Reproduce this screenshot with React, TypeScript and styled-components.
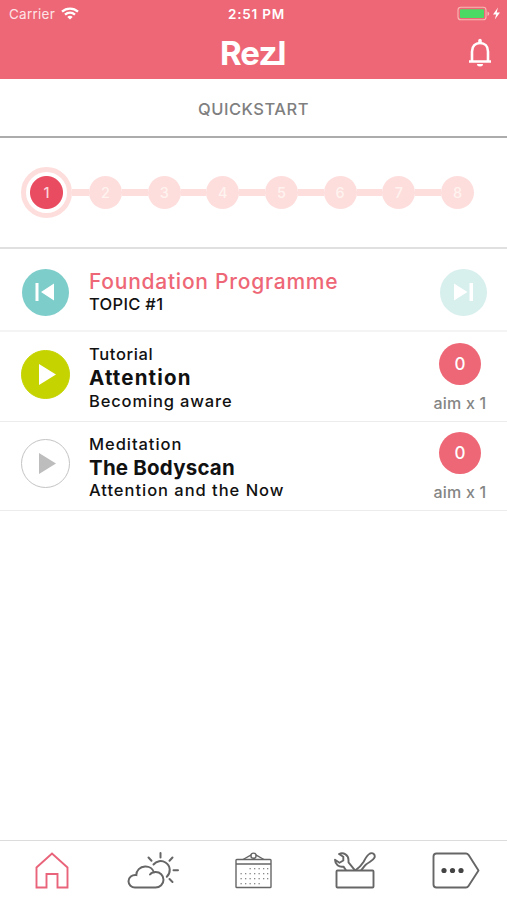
import styled, { createGlobalStyle } from "styled-components";

const GlobalStyle = createGlobalStyle`
  * {
    box-sizing: border-box;
  }

  body {
    margin: 0;
    background: #fff;
    font-family: Inter, "Liberation Sans", sans-serif;
    color: #111;
  }
`;

const Screen = styled.div`
  width: 100%;
  height: 100vh;
  display: flex;
  flex-direction: column;
  overflow: hidden;
`;

const Header = styled.header`
  height: 79px;
  background: #ee6776;
  color: #fff;
  flex: none;
`;

const StatusBar = styled.div`
  height: 27px;
  padding: 0 5px 0 9px;
  display: grid;
  grid-template-columns: 1fr auto 1fr;
  align-items: center;
  font-size: 13.5px;
`;

const Carrier = styled.div`
  display: flex;
  align-items: center;
  gap: 6px;
  letter-spacing: 0.25px;
  color: #fde4e6;
`;

const Clock = styled.div`
  padding-left: 2px;
  font-size: 13.5px;
  font-weight: 600;
  letter-spacing: 0.8px;
`;

const Battery = styled.div`
  display: flex;
  justify-content: flex-end;
`;

const Brand = styled.div`
  height: 52px;
  padding: 0 14px 0 220px;
  display: flex;
  align-items: center;
  justify-content: space-between;
`;

const Title = styled.h1`
  margin: 0;
  height: 59px;
  padding-top: 2px;
  flex: none;
  border-bottom: 2px solid #acacac;
  display: flex;
  align-items: center;
  justify-content: center;
  font-size: 16.5px;
  font-weight: 500;
  letter-spacing: 0.5px;
  color: #7f7f7f;
`;

const Steps = styled.div`
  height: 111px;
  flex: none;
  padding: 0 33px 0 21px;
  border-bottom: 2px solid #e0e0e0;
  display: flex;
  align-items: center;
`;

const Step = styled.div`
  width: 33px;
  height: 33px;
  border-radius: 50%;
  flex: none;
  display: flex;
  align-items: center;
  justify-content: center;
  background: #fddedd;
  color: #fff3ef;
  font-size: 14.5px;
  font-weight: 500;
`;

const ActiveStep = styled(Step)`
  width: 51px;
  height: 51px;
  border: 5px solid #fddedd;
  background: radial-gradient(circle, #e94b60 16px, #fff 17px);
  color: #fbd5da;
`;

const Connector = styled.div<{ $short?: boolean }>`
  flex: ${({ $short }) => ($short ? "0 0 17px" : "1")};
  height: 7px;
  background: #fddedd;
`;

const Row = styled.div<{ $height: number; $line?: number }>`
  height: ${({ $height }) => $height}px;
  flex: none;
  border-bottom: ${({ $line = 1 }) => $line}px solid ${({ $line = 1 }) => ($line > 1 ? "#f4f4f4" : "#ececec")};
  padding: ${({ $line = 1 }) => ($line > 1 ? "5px" : "2px")} 20px 0;
  display: grid;
  grid-template-columns: 69px 1fr 54px;
  align-items: center;
`;

const RoundButton = styled.button<{ $size: number; $bg: string; $line?: string }>`
  width: ${({ $size }) => $size}px;
  height: ${({ $size }) => $size}px;
  margin: 0 0 0 ${({ $size }) => (50 - $size) / 2}px;
  padding: 0;
  border: ${({ $line }) => ($line ? `1px solid ${$line}` : "none")};
  border-radius: 50%;
  background: ${({ $bg }) => $bg};
  display: flex;
  align-items: center;
  justify-content: center;
`;

const PlayButton = styled(RoundButton)`
  margin: 0 0 6px 0.5px;
`;

const NextButton = styled(RoundButton)`
  justify-self: end;
`;

const Lines = styled.div<{ $top?: number }>`
  padding-top: ${({ $top = 0 }) => $top}px;
  display: flex;
  flex-direction: column;
  white-space: nowrap;
`;

const Programme = styled.span`
  font-size: 21px;
  line-height: 23px;
  font-weight: 500;
  letter-spacing: 0.75px;
  color: #ee6776;
`;

const Line = styled.span<{ $spacing?: number }>`
  font-size: 16.5px;
  line-height: 23px;
  font-weight: 500;
  letter-spacing: ${({ $spacing = 0 }) => $spacing}px;
`;

const Name = styled.span<{ $spacing?: number }>`
  font-size: 20.5px;
  line-height: 23.5px;
  font-weight: 700;
  letter-spacing: ${({ $spacing = 0 }) => $spacing}px;
`;

const Goal = styled.div`
  padding-top: 1px;
  display: flex;
  flex-direction: column;
  align-items: center;
  white-space: nowrap;
  font-size: 16px;
  font-weight: 500;
  letter-spacing: 0.2px;
  color: #858585;
`;

const Count = styled.div`
  width: 42px;
  height: 42px;
  margin-bottom: 8px;
  border-radius: 50%;
  background: #ee6776;
  color: #fff;
  display: flex;
  align-items: center;
  justify-content: center;
  font-size: 17px;
`;

const TabBar = styled.nav`
  height: 60px;
  margin-top: auto;
  padding: 0 1px;
  flex: none;
  border-top: 1px solid #dcdcdc;
  display: grid;
  grid-template-columns: repeat(5, 1fr);
`;

const Tab = styled.button<{ $active?: boolean }>`
  padding: 0;
  border: 0;
  background: none;
  display: flex;
  align-items: center;
  justify-content: center;
  color: ${({ $active }) => ($active ? "#e9647a" : "#666")};
`;

const WifiIcon = () => (
  <svg width="18" height="13" viewBox="0 0 18 13" fill="none" stroke="#fff" strokeWidth="2.3">
    <path d="M1 4.6C5.5.5 12.5.5 17 4.6" />
    <path d="M4 7.7c3-2.7 7-2.7 10 0" />
    <path d="M9 12.5 6.3 9.9c1.6-1.4 3.8-1.4 5.4 0z" fill="#fff" stroke="none" />
  </svg>
);

const BatteryIcon = () => (
  <svg width="45" height="15" viewBox="0 0 45 15" fill="none">
    <rect x="1" y="1.3" width="28" height="12.4" rx="2.8" stroke="#f8b9b5" strokeWidth="1.1" />
    <rect x="3" y="3.2" width="24" height="8.8" rx="1" fill="#4cd964" />
    <path d="M30.5 5.5v4.5q1.8-.8 1.8-2.2t-1.8-2.3z" fill="#f8b9b5" />
    <path d="M41 1.5 36 8.5h3.2L37.8 13.5 43 6.5h-3.3z" fill="#fff" />
  </svg>
);

const LogoMark = styled.div`
  display: flex;
  align-items: center;
  font-size: 33px;
  line-height: 40px;
  font-weight: 700;
  letter-spacing: -0.9px;
  padding-bottom: 1px;
`;

// the foot that ties the z to the l
const Foot = styled.span`
  width: 7px;
  height: 4px;
  margin: 21px -4px 0 -2px;
  background: #fff;
`;

const Logo = () => (
  <LogoMark>
    Rez
    <Foot />
    l
  </LogoMark>
);

const BellIcon = () => (
  <svg width="26" height="30" viewBox="0 0 26 30" fill="none" stroke="#fff" strokeWidth="2.6">
    <path d="M2 23.5h22M5 23.5V13.5C5 8 8.5 5 13 5s8 3 8 8.5v10" />
    <path d="M13 2.5v2" strokeWidth="3.5" strokeLinecap="round" />
    <path d="M10 26h6a3 2.5 0 0 1-6 0z" fill="#fff" stroke="none" />
  </svg>
);

const PlayIcon = ({ color = "#fff" }) => (
  <svg width="47" height="47" viewBox="1 1 47 47">
    <path d="M18 14v21l17-10.5z" fill={color} />
  </svg>
);

const SkipIcon = ({ forward = false }) => (
  <svg width="20" height="20" viewBox="0 0 20 20" fill="#fff">
    {forward ? (
      <path d="M0 1.5v17l13.5-8.500zM15.500 1H19v18h-3.500z" />
    ) : (
      <path d="M19 1.5v17L6 10zM.5 1H3.5v18H.5z" />
    )}
  </svg>
);

const HomeIcon = () => (
  <svg width="34" height="37" viewBox="0 0 34 37" fill="none" stroke="currentColor" strokeWidth="1.9">
    <path d="M1.500 35.500V15.500L17 1.500l15.500 14v20H22.500V22h-11v13.500z" />
  </svg>
);

const WeatherIcon = () => (
  <svg width="52" height="37" viewBox="0 0 52 37" fill="none" stroke="currentColor" strokeWidth="2" strokeLinecap="round">
    <path d="M8 35.5h20.5c4.5 0 8-3.5 8-7.8 0-4.4-3.5-7.7-7.8-7.7-2.5 0-4.500 1-5.700 2.500M27 20.500c-1-3.800-4.700-6.200-9-6-5 .2-8.700 4-8.700 8.600C5 22.600 1.500 25.500 1.500 29.300c0 3.500 3 6.200 6.500 6.200" />
    <path d="M26.500 12.500C29.500 9 34.500 8 38.500 10.500c5.500 3.400 5.300 10.500 1.300 14.200" />
    <path d="M33.500 1v4.500M21.500 5.500l3 3.200M45.500 5.500l-3 3.200M46.500 18.300H51M42.500 27l3 3" />
  </svg>
);

const dots = [16, 21, 26, 31].map((y, row) => ({
  y,
  xs: [5.5, 10, 14.5, 19, 23.5, 28, 32].slice(row === 0 ? 2 : 0, row === 3 ? 5 : 7),
}));

const CalendarIcon = () => (
  <svg width="37" height="37" viewBox="0 0 37 37" fill="none" stroke="currentColor" strokeWidth="1.4">
    <rect x="1" y="7.5" width="35" height="28" rx=".8" />
    <path d="M1 12h35M8 7.5l8.3-4.7M29 7.5l-8.3-4.7" />
    <circle cx="18.5" cy="3.7" r="2.6" />
    {dots.map(({ y, xs }) =>
      xs.map((x) => <rect key={`${x}-${y}`} x={x} y={y} width="1.3" height="1.3" fill="#888" stroke="none" />)
    )}
  </svg>
);

const ToolsIcon = () => (
  <svg width="42" height="37" viewBox="0 0 42 37" fill="none" stroke="currentColor" strokeWidth="1.9" strokeLinejoin="round">
    <rect x="2.5" y="18.5" width="37" height="17" rx="1" />
    <path d="M12 18.300 9.500 14.600C5 15.500 1 12.300 1 7.700l4.500 3L9.300 8.500V4.700L5 2C9.500 0 14.700 3 14.500 8.300v2l6.500 8" />
    <path d="M21.500 18.300c4-3 6-5 8-8.300 2-4 3.500-7 6.500-8.500 3-1.200 5.500 1 4.500 4.200-1.300 3-5 4-8.500 6.800-2 1.700-3 3.800-5 5.800" />
  </svg>
);

const MoreIcon = () => (
  <svg width="48" height="37" viewBox="0 0 48 37" fill="none" stroke="currentColor" strokeWidth="1.9" strokeLinejoin="round">
    <path d="M4.5 1.5H34q1.5 0 2.5 1.3L46.5 18.500 36.500 34q-1 1.500-2.500 1.500H4.500q-3 0-3-3v-28q0-3 3-3z" />
    <g fill="#444" stroke="none">
      <circle cx="12" cy="18.5" r="2.6" />
      <circle cx="20.5" cy="18.5" r="2.6" />
      <circle cx="29" cy="18.5" r="2.6" />
    </g>
  </svg>
);

const sessions = [
  { kind: "Tutorial", name: "Attention", detail: "Becoming aware", ready: true, spacing: [0.65, 1.15, 0.85] },
  { kind: "Meditation", name: "The Bodyscan", detail: "Attention and the Now", ready: false, spacing: [0.95, 0.2, 0.97] },
];

const App = () => {
  return (
    <Screen>
      <GlobalStyle />
      <Header>
        <StatusBar>
          <Carrier>
            Carrier <WifiIcon />
          </Carrier>
          <Clock>2:51 PM</Clock>
          <Battery>
            <BatteryIcon />
          </Battery>
        </StatusBar>
        <Brand>
          <Logo />
          <BellIcon />
        </Brand>
      </Header>

      <Title>QUICKSTART</Title>

      <Steps>
        <ActiveStep>1</ActiveStep>
        {[2, 3, 4, 5, 6, 7, 8].map((n) => [
          <Connector key={`line-${n}`} $short={n === 2} />,
          <Step key={n}>{n}</Step>,
        ])}
      </Steps>

      <Row $height={83} $line={2}>
        <RoundButton $size={47} $bg="#7dcdca">
          <SkipIcon />
        </RoundButton>
        <Lines $top={2}>
          <Programme>Foundation Programme</Programme>
          <Line $spacing={0.3}>TOPIC #1</Line>
        </Lines>
        <NextButton $size={47} $bg="#d7efed">
          <SkipIcon forward />
        </NextButton>
      </Row>

      {sessions.map(({ kind, name, detail, ready, spacing }) => (
        <Row key={name} $height={89.5}>
          <PlayButton $size={49} $bg={ready ? "#c5d300" : "#fff"} $line={ready ? "#c5d300" : "#c4c4c4"}>
            <PlayIcon color={ready ? "#fff" : "#bdbdbd"} />
          </PlayButton>
          <Lines $top={1}>
            <Line $spacing={spacing[0]}>{kind}</Line>
            <Name $spacing={spacing[1]}>{name}</Name>
            <Line $spacing={spacing[2]}>{detail}</Line>
          </Lines>
          <Goal>
            <Count>0</Count>
            aim x 1
          </Goal>
        </Row>
      ))}

      <TabBar>
        <Tab $active>
          <HomeIcon />
        </Tab>
        <Tab>
          <WeatherIcon />
        </Tab>
        <Tab>
          <CalendarIcon />
        </Tab>
        <Tab>
          <ToolsIcon />
        </Tab>
        <Tab>
          <MoreIcon />
        </Tab>
      </TabBar>
    </Screen>
  );
};

export default App;
